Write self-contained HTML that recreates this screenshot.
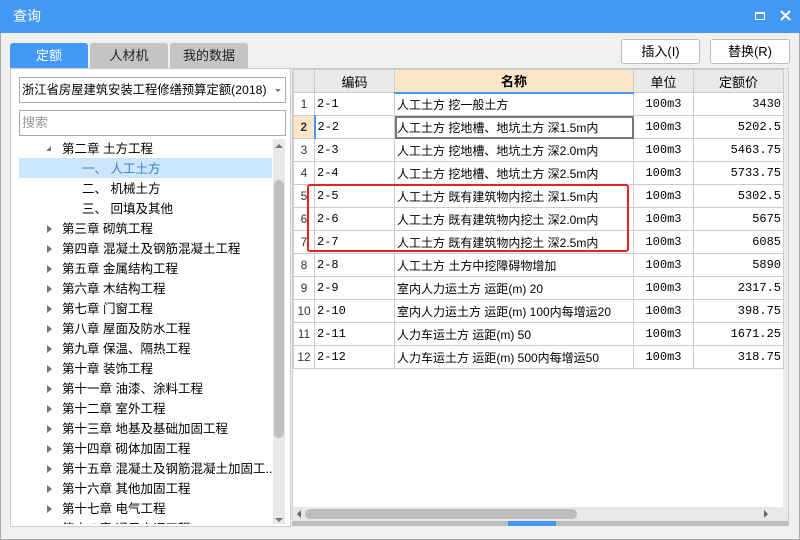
<!DOCTYPE html><html><head><meta charset="utf-8"><style>
*{box-sizing:border-box;margin:0;padding:0}
body{width:800px;height:540px;overflow:hidden;background:#f0f0f0;font-family:"Liberation Sans","Noto Sans CJK SC",sans-serif;font-size:12px;color:#000;position:relative}
.a{position:absolute}
.title{left:0;top:0;width:800px;height:33px;background:#4499f6;color:#fff;font-size:14px;line-height:33px;padding-left:13px}
.tab{top:43px;height:25px;line-height:25px;text-align:center;font-size:13px;border-radius:3px 3px 0 0;background:#c4c4c4;color:#222}
.btn{top:39px;height:25px;line-height:23px;text-align:center;background:#fff;border:1px solid #bbb;border-radius:3px;font-size:13px}
.tree{position:absolute;left:0;top:139px;width:272px;height:385px;overflow:hidden}
.tree div{position:absolute;height:20px;line-height:20px;font-size:12.5px;white-space:nowrap}
.tree .tri{position:absolute;left:47px;width:0;height:0;border-top:4px solid transparent;border-bottom:4px solid transparent;border-left:5px solid #777}
table{border-collapse:collapse;position:absolute;left:293px;top:69px;font-size:12px}
td{border:1px solid #ccc;height:23px;padding:0 2px;white-space:nowrap;font-family:"Liberation Mono","Noto Sans CJK SC",monospace}
td.n{font-family:"Liberation Sans","Noto Sans CJK SC",sans-serif}
th{background:#eaeaea;border:1px solid #ccc;height:23px;font-weight:normal;font-size:13px}
td:first-child{background:#fff;text-align:center;color:#333;font-family:"Liberation Sans",sans-serif}
td:nth-child(4){text-align:center}
td:nth-child(5){text-align:right}
</style></head><body>
<div class="a" style="left:0;top:0;width:800px;height:540px;border:1px solid #aaa;border-top:none"></div>
<div class="a title">查询</div>
<div class="a" style="left:755px;top:12px;width:10px;height:8px;border:1.5px solid #fff;border-top-width:2.5px"></div>
<svg class="a" style="left:780px;top:10px" width="11" height="11" viewBox="0 0 11 11"><path d="M1 1L10 10M10 1L1 10" stroke="#fff" stroke-width="2"/></svg>
<div class="a tab" style="left:10px;width:78px;background:#4499f6;color:#fff">定额</div>
<div class="a tab" style="left:90px;width:78px">人材机</div>
<div class="a tab" style="left:170px;width:78px">我的数据</div>
<div class="a btn" style="left:621px;width:79px">插入(I)</div>
<div class="a btn" style="left:710px;width:80px">替换(R)</div>
<div class="a" style="left:10px;top:68px;width:281px;height:459px;background:#fff;border:1px solid #ccc"></div>
<div class="a" style="left:19px;top:77px;width:267px;height:26px;border:1px solid #aaa;background:#fff;line-height:24px;padding-left:2px;font-size:12.3px;white-space:nowrap;overflow:hidden">浙江省房屋建筑安装工程修缮预算定额(2018)</div>
<div class="a" style="left:275px;top:89px;border-left:3px solid transparent;border-right:3px solid transparent;border-top:3px solid #777"></div>
<div class="a" style="left:19px;top:110px;width:267px;height:26px;border:1px solid #aaa;background:#fff;line-height:24px;padding-left:2px;color:#999;font-size:13px">搜索</div>
<div class="a" style="left:273px;top:139px;width:12px;height:385px;background:#e8e8e8"></div>
<div class="a" style="left:274px;top:180px;width:10px;height:258px;background:#c0c0c0;border-radius:5px"></div>
<div class="a" style="left:275px;top:144px;border-left:4px solid transparent;border-right:4px solid transparent;border-bottom:4px solid #777"></div>
<div class="a" style="left:275px;top:518px;border-left:4px solid transparent;border-right:4px solid transparent;border-top:4px solid #777"></div>
<div class="tree">
<div style="left:19px;top:19px;width:253px;height:20px;background:#cce6fb"></div>
<div style="left:46px;top:7px;width:0;height:0;border-left:5px solid transparent;border-bottom:5px solid #777"></div>
<div style="left:62px;top:0px">第二章 土方工程</div>
<div style="left:82px;top:20px;color:#3a7fd0">一、 人工土方</div>
<div style="left:82px;top:40px">二、 机械土方</div>
<div style="left:82px;top:60px">三、 回填及其他</div>
<div style="left:62px;top:80px">第三章 砌筑工程</div>
<div style="left:62px;top:100px">第四章 混凝土及钢筋混凝土工程</div>
<div style="left:62px;top:120px">第五章 金属结构工程</div>
<div style="left:62px;top:140px">第六章 木结构工程</div>
<div style="left:62px;top:160px">第七章 门窗工程</div>
<div style="left:62px;top:180px">第八章 屋面及防水工程</div>
<div style="left:62px;top:200px">第九章 保温、隔热工程</div>
<div style="left:62px;top:220px">第十章 装饰工程</div>
<div style="left:62px;top:240px">第十一章 油漆、涂料工程</div>
<div style="left:62px;top:260px">第十二章 室外工程</div>
<div style="left:62px;top:280px">第十三章 地基及基础加固工程</div>
<div style="left:62px;top:300px">第十四章 砌体加固工程</div>
<div style="left:62px;top:320px">第十五章 混凝土及钢筋混凝土加固工...</div>
<div style="left:62px;top:340px">第十六章 其他加固工程</div>
<div style="left:62px;top:360px">第十七章 电气工程</div>
<div style="left:62px;top:380px">第十八章 通风空调工程</div>
<div class="tri" style="top:86px"></div><div class="tri" style="top:106px"></div><div class="tri" style="top:126px"></div><div class="tri" style="top:146px"></div><div class="tri" style="top:166px"></div><div class="tri" style="top:186px"></div><div class="tri" style="top:206px"></div><div class="tri" style="top:226px"></div><div class="tri" style="top:246px"></div><div class="tri" style="top:266px"></div><div class="tri" style="top:286px"></div><div class="tri" style="top:306px"></div><div class="tri" style="top:326px"></div><div class="tri" style="top:346px"></div><div class="tri" style="top:366px"></div>
</div>
<div class="a" style="left:292px;top:68px;width:497px;height:452px;background:#fff;border:1px solid #ccc"></div>
<div class="a" style="left:783px;top:69px;width:5px;height:449px;background:#eaeaea"></div>
<table>
<tr><th style="width:21px"></th><th style="width:80px">编码</th><th style="width:239px;background:#fde6c8;font-weight:bold;border-bottom:2px solid #4499f6">名称</th><th style="width:60px">单位</th><th style="width:90px">定额价</th></tr>
<tr><td>1</td><td>2-1</td><td class="n">人工土方 挖一般土方</td><td>100m3</td><td>3430</td></tr>
<tr><td style="background:#fde6c8;font-weight:bold;border-right:2px solid #4499f6">2</td><td>2-2</td><td class="n" style="outline:2px solid #777;outline-offset:-2px">人工土方 挖地槽、地坑土方 深1.5m内</td><td>100m3</td><td>5202.5</td></tr>
<tr><td>3</td><td>2-3</td><td class="n">人工土方 挖地槽、地坑土方 深2.0m内</td><td>100m3</td><td>5463.75</td></tr>
<tr><td>4</td><td>2-4</td><td class="n">人工土方 挖地槽、地坑土方 深2.5m内</td><td>100m3</td><td>5733.75</td></tr>
<tr><td>5</td><td>2-5</td><td class="n">人工土方 既有建筑物内挖土 深1.5m内</td><td>100m3</td><td>5302.5</td></tr>
<tr><td>6</td><td>2-6</td><td class="n">人工土方 既有建筑物内挖土 深2.0m内</td><td>100m3</td><td>5675</td></tr>
<tr><td>7</td><td>2-7</td><td class="n">人工土方 既有建筑物内挖土 深2.5m内</td><td>100m3</td><td>6085</td></tr>
<tr><td>8</td><td>2-8</td><td class="n">人工土方 土方中挖障碍物增加</td><td>100m3</td><td>5890</td></tr>
<tr><td>9</td><td>2-9</td><td class="n">室内人力运土方 运距(m) 20</td><td>100m3</td><td>2317.5</td></tr>
<tr><td>10</td><td>2-10</td><td class="n">室内人力运土方 运距(m) 100内每增运20</td><td>100m3</td><td>398.75</td></tr>
<tr><td>11</td><td>2-11</td><td class="n">人力车运土方 运距(m) 50</td><td>100m3</td><td>1671.25</td></tr>
<tr><td>12</td><td>2-12</td><td class="n">人力车运土方 运距(m) 500内每增运50</td><td>100m3</td><td>318.75</td></tr>
</table>
<div class="a" style="left:307px;top:184px;width:322px;height:68px;border:2px solid #e8231f;border-radius:3px"></div>
<div class="a" style="left:293px;top:507px;width:495px;height:14px;background:#e8e8e8"></div>
<div class="a" style="left:305px;top:509px;width:272px;height:10px;background:#bdbdbd;border-radius:5px"></div>
<div class="a" style="left:297px;top:510px;border-top:4px solid transparent;border-bottom:4px solid transparent;border-right:4px solid #666"></div>
<div class="a" style="left:764px;top:510px;border-top:4px solid transparent;border-bottom:4px solid transparent;border-left:4px solid #666"></div>
<div class="a" style="left:292px;top:521px;width:497px;height:5px;background:#bdbdbd"></div>
<div class="a" style="left:508px;top:521px;width:48px;height:5px;background:#4499f6"></div>
</body></html>
